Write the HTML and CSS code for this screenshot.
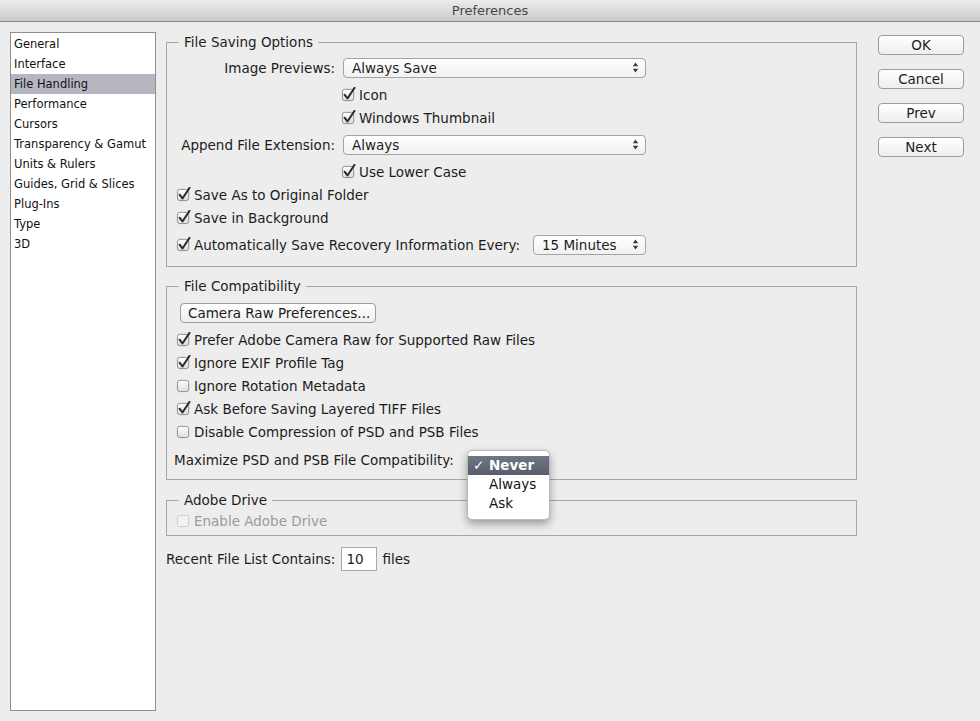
FILE: index.html
```html
<!DOCTYPE html>
<html lang="en">
  <head>
    <meta charset="UTF-8" />
    <title>Preferences</title>
    <link rel="stylesheet" href="styles.css">
  </head>
  <body>
    <!-- shared checkbox / popup glyphs -->
    <svg class="defs" width="0" height="0">
      <defs>
        <linearGradient id="cb-fill" x1="0" y1="0" x2="0" y2="1">
          <stop offset="0" stop-color="#ffffff" />
          <stop offset="1" stop-color="#dcdcdc" />
        </linearGradient>
        <symbol id="cb-on" viewBox="0 0 16 16">
          <rect x="1.5" y="2.5" width="12" height="12" rx="2.5" fill="url(#cb-fill)" stroke="#8a8a8a" />
          <path d="M3.8 8.2 L6.9 12.2 L14.4 0.9" fill="none" stroke="#2b2b2b" stroke-width="2.1" stroke-linecap="round" stroke-linejoin="round" />
        </symbol>
        <symbol id="cb-off" viewBox="0 0 16 16">
          <rect x="1.5" y="2.5" width="12" height="12" rx="2.5" fill="url(#cb-fill)" stroke="#8a8a8a" />
        </symbol>
        <symbol id="cb-disabled" viewBox="0 0 16 16">
          <rect x="1.5" y="2.5" width="12" height="12" rx="2.5" fill="#f2f2f2" stroke="#c6c6c6" />
        </symbol>
        <symbol id="updown" viewBox="0 0 7 11">
          <path d="M3.5 0.5 L6.2 4.2 H0.8 Z M3.5 10.5 L6.2 6.8 H0.8 Z" fill="#3a3a3a" />
        </symbol>
      </defs>
    </svg>

    <div class="titlebar">Preferences</div>

    <div class="window">
      <ul class="sidebar">
        <li>General</li>
        <li>Interface</li>
        <li class="selected">File Handling</li>
        <li>Performance</li>
        <li>Cursors</li>
        <li>Transparency &amp; Gamut</li>
        <li>Units &amp; Rulers</li>
        <li>Guides, Grid &amp; Slices</li>
        <li>Plug-Ins</li>
        <li>Type</li>
        <li>3D</li>
      </ul>

      <div class="panel">
        <fieldset class="group saving">
          <legend>File Saving Options</legend>

          <div class="row field">
            <span class="field-label">Image Previews:</span>
            <div class="select wide">
              <span>Always Save</span>
              <svg class="arrows"><use href="#updown" /></svg>
            </div>
          </div>
          <div class="row check indent">
            <svg class="cb"><use href="#cb-on" /></svg>Icon
          </div>
          <div class="row check indent">
            <svg class="cb"><use href="#cb-on" /></svg>Windows Thumbnail
          </div>

          <div class="row field">
            <span class="field-label">Append File Extension:</span>
            <div class="select wide">
              <span>Always</span>
              <svg class="arrows"><use href="#updown" /></svg>
            </div>
          </div>
          <div class="row check indent">
            <svg class="cb"><use href="#cb-on" /></svg>Use Lower Case
          </div>

          <div class="row check">
            <svg class="cb"><use href="#cb-on" /></svg>Save As to Original Folder
          </div>
          <div class="row check">
            <svg class="cb"><use href="#cb-on" /></svg>Save in Background
          </div>
          <div class="row field recovery">
            <span class="check-inline">
              <svg class="cb"><use href="#cb-on" /></svg>Automatically Save Recovery Information Every:
            </span>
            <div class="select short">
              <span>15 Minutes</span>
              <svg class="arrows"><use href="#updown" /></svg>
            </div>
          </div>
        </fieldset>

        <fieldset class="group compat">
          <legend>File Compatibility</legend>

          <div class="row field">
            <button class="push camera">Camera Raw Preferences...</button>
          </div>
          <div class="row check">
            <svg class="cb"><use href="#cb-on" /></svg>Prefer Adobe Camera Raw for Supported Raw Files
          </div>
          <div class="row check">
            <svg class="cb"><use href="#cb-on" /></svg>Ignore EXIF Profile Tag
          </div>
          <div class="row check">
            <svg class="cb"><use href="#cb-off" /></svg>Ignore Rotation Metadata
          </div>
          <div class="row check">
            <svg class="cb"><use href="#cb-on" /></svg>Ask Before Saving Layered TIFF Files
          </div>
          <div class="row check">
            <svg class="cb"><use href="#cb-off" /></svg>Disable Compression of PSD and PSB Files
          </div>
          <div class="row maximize">
            <span class="max-label">Maximize PSD and PSB File Compatibility:</span>
            <span class="popup-anchor">
              <ul class="popup">
                <li class="active"><span class="tick">✓</span>Never</li>
                <li>Always</li>
                <li>Ask</li>
              </ul>
            </span>
          </div>
        </fieldset>

        <fieldset class="group drive">
          <legend>Adobe Drive</legend>
          <div class="row check disabled">
            <svg class="cb"><use href="#cb-disabled" /></svg>Enable Adobe Drive
          </div>
        </fieldset>

        <div class="recent">
          <span>Recent File List Contains:</span>
          <span class="num-input">10</span>
          <span>files</span>
        </div>
      </div>

      <div class="buttons">
        <button class="push">OK</button>
        <button class="push">Cancel</button>
        <button class="push">Prev</button>
        <button class="push">Next</button>
      </div>
    </div>
  </body>
</html>
```

FILE: styles.css
```css
body {
  margin: 0;
  background: #ededed;
  font-family: "DejaVu Sans", "Noto Sans", sans-serif;
  font-size: 13.5px;
  color: #1c1c1c;
  width: 980px;
  height: 721px;
  overflow: hidden;
}
.defs {
  position: absolute;
  width: 0;
  height: 0;
}
.titlebar {
  height: 21px;
  line-height: 21px;
  font-size: 13px;
  text-align: center;
  color: #474747;
  background: linear-gradient(#ececec, #cacaca);
  border-bottom: 1px solid #858585;
}
.window {
  display: flex;
  align-items: flex-start;
  padding: 10px 0 0 10px;
}
.sidebar {
  list-style: none;
  margin: 0;
  padding: 1px 0;
  width: 146px;
  height: 679px;
  box-sizing: border-box;
  background: white;
  border: 1px solid #8e8e8e;
  font-size: 11.5px;
  color: #111;
}
.sidebar li {
  height: 20px;
  line-height: 20px;
  padding-left: 3px;
  white-space: nowrap;
}
.sidebar li.selected {
  background: #b6b6c0;
}
.panel {
  width: 691px;
  margin-left: 10px;
}
.group {
  margin: 0;
  min-width: 0;
  border: 1px solid #a6a6a6;
  padding: 2px 9px 6px 9px;
}
.group legend {
  margin-left: 3px;
  padding: 0 5px;
  line-height: 16px;
  color: #1e1e1e;
}
.saving {
  margin-top: 2px;
}
.compat {
  margin-top: 11px;
  padding-top: 3px;
  padding-bottom: 3px;
}
.drive {
  margin-top: 12px;
  padding-top: 1px;
  padding-bottom: 3px;
}
.row {
  display: flex;
  align-items: center;
  white-space: nowrap;
}
.row.check {
  height: 23px;
}
.row.field {
  height: 31px;
}
.row.indent {
  padding-left: 165px;
}
.field-label {
  width: 159px;
  text-align: right;
  margin-right: 8px;
}
.cb {
  width: 15px;
  height: 15px;
  margin-right: 3px;
  flex: none;
}
.check-inline {
  display: flex;
  align-items: center;
}
.recovery {
  width: 470px;
}
.recovery .select {
  margin-left: auto;
}
.select {
  height: 20px;
  box-sizing: border-box;
  border: 1px solid #a4a4a4;
  border-radius: 4px;
  background: linear-gradient(#ffffff, #f1f1f1);
  display: flex;
  align-items: center;
  justify-content: space-between;
  padding: 0 6px 0 8px;
}
.select.wide {
  width: 303px;
}
.select.short {
  width: 113px;
}
.arrows {
  width: 7px;
  height: 11px;
}
.push {
  font-family: inherit;
  font-size: 13.5px;
  color: #1c1c1c;
  height: 20px;
  padding: 0;
  border: 1px solid #9c9c9c;
  border-radius: 4px;
  background: linear-gradient(#ffffff, #eeeeee);
}
.camera {
  width: 196px;
  margin-left: 4px;
  text-align: left;
  padding-left: 7px;
}
.maximize {
  height: 33px;
  margin-left: -2px;
}
.max-label {
  width: 293px;
}
.popup-anchor {
  position: relative;
  display: inline-block;
  width: 83px;
  height: 20px;
}
.popup {
  position: absolute;
  top: 0;
  left: 0;
  width: 83px;
  box-sizing: border-box;
  list-style: none;
  margin: 0;
  padding: 5px 0 6px;
  background: white;
  border: 1px solid #b9b9b9;
  border-radius: 5px;
  box-shadow: 0 4px 9px rgba(0, 0, 0, 0.35);
  z-index: 2;
}
.popup li {
  height: 19px;
  line-height: 19px;
  padding-left: 21px;
  color: #111;
}
.popup li.active {
  padding-left: 5px;
  color: white;
  font-weight: bold;
  background: linear-gradient(#6f7685, #575d6a);
}
.tick {
  display: inline-block;
  width: 16px;
}
.disabled {
  color: #9b9b9b;
}
.recent {
  display: flex;
  align-items: center;
  margin-top: 11px;
  height: 24px;
}
.num-input {
  width: 36px;
  height: 24px;
  box-sizing: border-box;
  margin: 0 5px 0 6px;
  padding-left: 4px;
  line-height: 22px;
  background: white;
  border: 1px solid #a9a9a9;
}
.buttons {
  display: flex;
  flex-direction: column;
  gap: 14px;
  margin-left: 21px;
  padding-top: 3px;
}
.buttons .push {
  width: 86px;
}
```
